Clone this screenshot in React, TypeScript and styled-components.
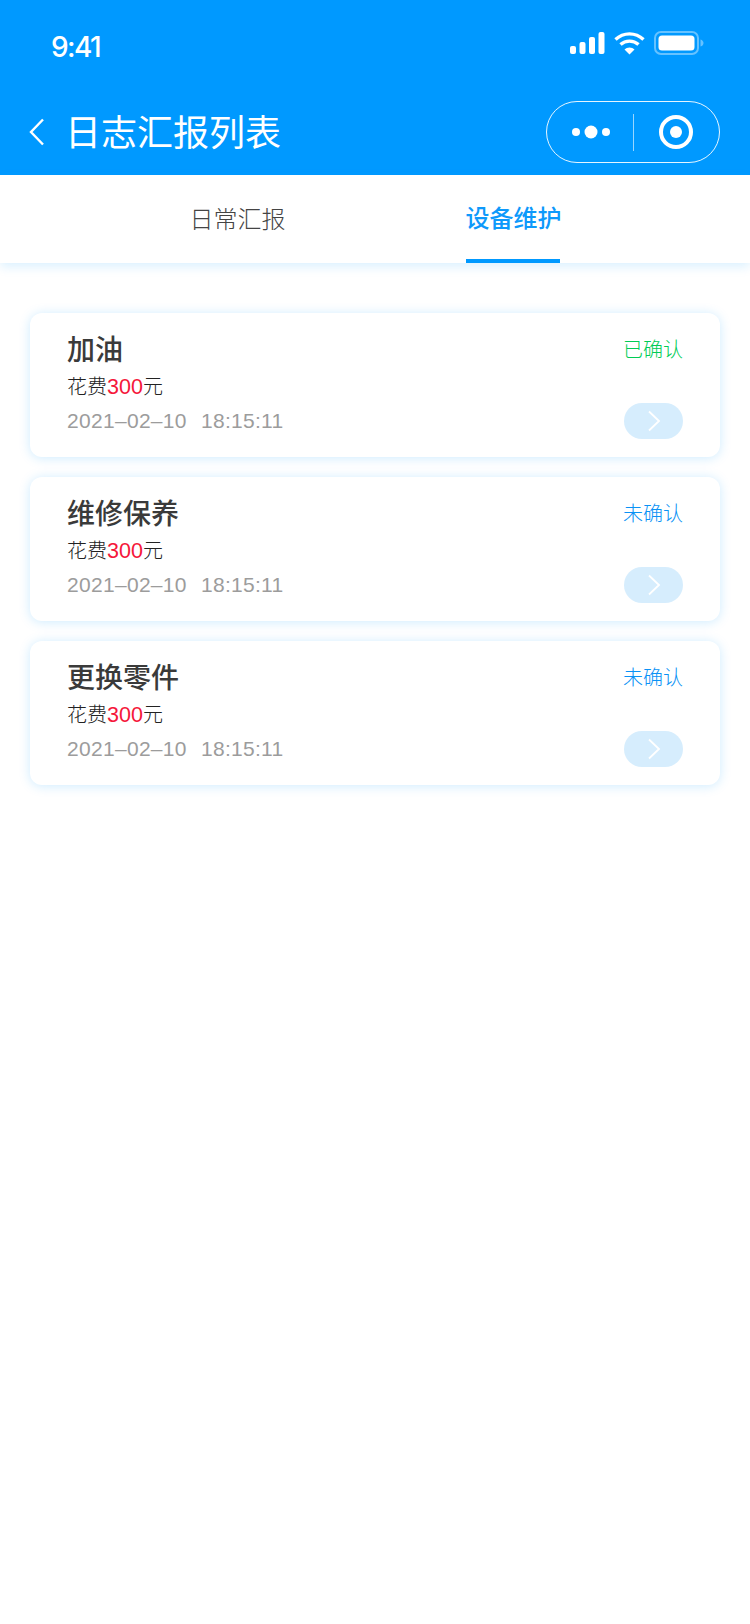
import React from 'react';
import styled, { createGlobalStyle } from 'styled-components';

const CJK = '"Liberation Sans", "Noto Sans CJK SC", sans-serif';

const Global = createGlobalStyle`
  html, body { margin: 0; padding: 0; background: #fff; }
  body { font-family: ${CJK}; }
`;

const Page = styled.div`
  width: 750px;
  min-height: 1624px;
  background: #fff;
`;

const Header = styled.header`
  height: 175px;
  box-sizing: border-box;
  background: #0099ff;
  color: #fff;
  display: flex;
  flex-direction: column;
`;

const StatusBar = styled.div`
  height: 92px;
  box-sizing: border-box;
  padding: 30px 46px 0 51px;
  display: flex;
  justify-content: space-between;
  align-items: flex-start;
`;

const Time = styled.div`
  font-family: Inter, sans-serif;
  font-size: 28px;
  line-height: 34px;
  font-weight: 500;
  letter-spacing: -1.6px;
`;

const StatusIcons = styled.div`
  display: flex;
  align-items: center;
  gap: 9px;
  margin-top: 1px;
`;

const NavBar = styled.div`
  display: flex;
  align-items: center;
  padding: 9px 30px 0 28px;
  height: 62px;
`;

const BackButton = styled.div`
  width: 37px;
  display: flex;
  align-items: center;
`;

const Title = styled.h1`
  margin: 4px 0 0;
  flex: 1;
  font-size: 36px;
  line-height: 44px;
  font-weight: 400;
`;

const Capsule = styled.div`
  width: 174px;
  height: 62px;
  box-sizing: border-box;
  border: 1px solid rgba(255, 255, 255, 0.9);
  border-radius: 31px;
  display: flex;
  align-items: center;
`;

const CapsulePart = styled.div`
  flex: 1;
  display: flex;
  align-items: center;
  justify-content: center;
`;

const CapsuleDivider = styled.div`
  width: 1px;
  height: 37px;
  background: rgba(255, 255, 255, 0.6);
`;

const Tabs = styled.nav`
  height: 88px;
  box-sizing: border-box;
  padding-right: 1px;
  background: #fff;
  display: flex;
  justify-content: center;
  gap: 182px;
  box-shadow: 0 4px 10px rgba(0, 153, 255, 0.14);
  position: relative;
`;

const Tab = styled.div<{ $active?: boolean }>`
  width: 94px;
  height: 88px;
  box-sizing: border-box;
  text-align: center;
  font-size: 24px;
  line-height: ${p => (p.$active ? 88 : 90)}px;
  white-space: nowrap;
  font-weight: ${p => (p.$active ? 500 : 300)};
  color: ${p => (p.$active ? '#0d99fb' : '#444')};
  border-bottom: 4px solid ${p => (p.$active ? '#0099ff' : 'transparent')};
`;

const List = styled.main`
  padding: 50px 30px 0;
  display: flex;
  flex-direction: column;
  gap: 20px;
`;

const Card = styled.article`
  height: 144px;
  box-sizing: border-box;
  padding: 19px 37px 0 37px;
  background: #fff;
  border-radius: 12px;
  box-shadow: 0 1px 12px rgba(0, 153, 255, 0.2);
  display: flex;
  justify-content: space-between;
`;

const CardBody = styled.div`
  display: flex;
  flex-direction: column;
`;

const CardTitle = styled.div`
  font-size: 28px;
  line-height: 38px;
  font-weight: 500;
  color: #3a3a3a;
`;

const Cost = styled.div`
  font-size: 20px;
  line-height: 30px;
  margin-top: 2px;
  color: #222;
  font-weight: 300;
`;

const Amount = styled.span`
  color: #f5173a;
  font-size: 21.500px;
`;

const DateLine = styled.div`
  font-size: 21px;
  line-height: 30px;
  margin-top: 4px;
  color: #9c9c9c;
  letter-spacing: 0.300px;
  word-spacing: 8px;
`;

const CardSide = styled.div`
  display: flex;
  flex-direction: column;
  align-items: flex-end;
  justify-content: space-between;
  padding-bottom: 18px;
`;

const Status = styled.div<{ $done?: boolean }>`
  font-size: 20px;
  line-height: 36px;
  font-weight: 300;
  color: ${p => (p.$done ? '#00cc55' : '#0a92f5')};
`;

const GoButton = styled.div`
  width: 59px;
  height: 36px;
  border-radius: 18px;
  background: #d6edfd;
  display: flex;
  align-items: center;
  justify-content: center;
`;

const items = [
  { title: '加油', status: '已确认', done: true },
  { title: '维修保养', status: '未确认', done: false },
  { title: '更换零件', status: '未确认', done: false },
];

export default function App() {
  return (
    <Page>
      <Global />
      <Header>
        <StatusBar>
          <Time>9:41</Time>
          <StatusIcons>
            <svg width="35" height="22" viewBox="0 0 35 22" fill="#fff">
              <rect x="0" y="14" width="6" height="8" rx="2" />
              <rect x="9.500" y="10" width="6" height="12" rx="2" />
              <rect x="19" y="5" width="6" height="17" rx="2" />
              <rect x="28.500" y="0" width="6" height="22" rx="2" />
            </svg>
            <svg width="31" height="23" viewBox="0 0 31 23" fill="none" stroke="#fff" strokeWidth="3.400">
              <path d="M1.500 7.500C9.500 0 21.500 0 29.500 7.500" />
              <path d="M6.500 12.500C11.500 8 19.500 8 24.500 12.500" />
              <path d="M15.500 22.500L10.500 17.500C13 14.800 18 14.800 20.500 17.500Z" fill="#fff" stroke="none" />
            </svg>
            <svg width="50" height="24" viewBox="0 0 50 24" fill="none">
              <rect x="1" y="1" width="43" height="22" rx="6" stroke="#fff" strokeOpacity="0.4" strokeWidth="2" />
              <rect x="4.500" y="4.500" width="36" height="15" rx="3.500" fill="#fff" />
              <path d="M46.500 8.500C48.500 9 49.500 10.500 49.500 12C49.500 13.500 48.500 15 46.500 15.500Z" fill="#fff" fillOpacity="0.4" />
            </svg>
          </StatusIcons>
        </StatusBar>
        <NavBar>
          <BackButton>
            <svg width="18" height="28" viewBox="0 0 18 28" fill="none" stroke="#fff" strokeWidth="2.400">
              <path d="M15 1.500L3 14L15 26.500" />
            </svg>
          </BackButton>
          <Title>日志汇报列表</Title>
          <Capsule>
            <CapsulePart>
              <svg width="40" height="14" viewBox="-2 0 40 14" fill="#fff">
                <circle cx="4" cy="7" r="4" />
                <circle cx="19" cy="7" r="6.500" />
                <circle cx="34" cy="7" r="4" />
              </svg>
            </CapsulePart>
            <CapsuleDivider />
            <CapsulePart>
              <svg width="34" height="34" viewBox="0 0 34 34" fill="none">
                <circle cx="17" cy="17" r="15" stroke="#fff" strokeWidth="4" />
                <circle cx="17" cy="17" r="6" fill="#fff" />
              </svg>
            </CapsulePart>
          </Capsule>
        </NavBar>
      </Header>
      <Tabs>
        <Tab>日常汇报</Tab>
        <Tab $active>设备维护</Tab>
      </Tabs>
      <List>
        {items.map(item => (
          <Card key={item.title}>
            <CardBody>
              <CardTitle>{item.title}</CardTitle>
              <Cost>
                花费<Amount>300</Amount>元
              </Cost>
              <DateLine>2021–02–10 18:15:11</DateLine>
            </CardBody>
            <CardSide>
              <Status $done={item.done}>{item.status}</Status>
              <GoButton>
                <svg width="14" height="22" viewBox="0 0 14 22" fill="none" stroke="#fff" strokeWidth="1.800">
                  <path d="M2 1.500L12 11L2 20.500" />
                </svg>
              </GoButton>
            </CardSide>
          </Card>
        ))}
      </List>
    </Page>
  );
}
